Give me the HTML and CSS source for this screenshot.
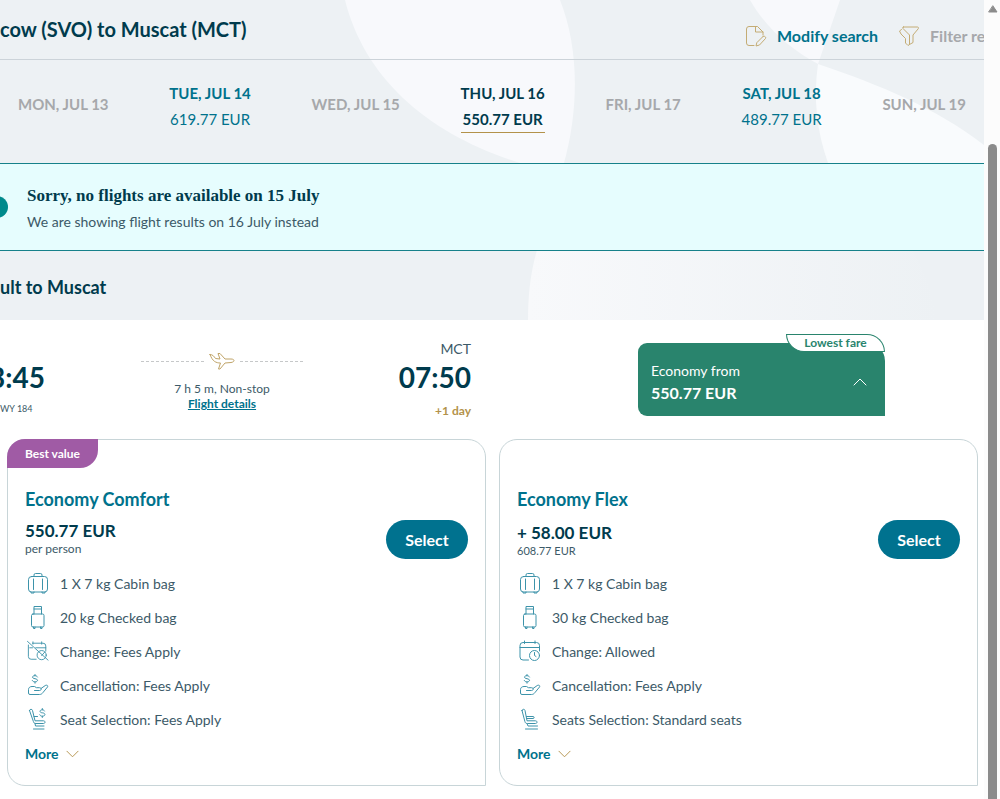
FILE: index.html
```html
<!DOCTYPE html>
<html lang="en">
<head>
  <meta charset="UTF-8">
  <meta name="viewport" content="width=device-width, initial-scale=1.0">
  <title>Flights to Muscat</title>
  <link rel="stylesheet" href="styles.css">
</head>
<body>
  <!-- shared icons -->
  <svg class="sprite" width="0" height="0" aria-hidden="true">
    <symbol id="cabin" viewBox="0 0 22 22">
      <rect x="1.5" y="4.5" width="19" height="15.5" rx="3"/>
      <path d="M7 4.5V3a1.5 1.5 0 0 1 1.5-1.5h5A1.5 1.5 0 0 1 15 3v1.5M6.5 7v10.5M15.5 7v10.5M4 20v1h3v-1M15 20v1h3v-1"/>
    </symbol>
    <symbol id="checked" viewBox="0 0 22 24">
      <rect x="4.5" y="9" width="12.5" height="13" rx="1.5"/>
      <path d="M7 9V1.5h7.500V9M7 4h7.500M6.5 22v1.500H8V22M13.5 22v1.500H15V22"/>
    </symbol>
    <symbol id="calendar" viewBox="0 0 22 22">
      <path d="M9.500 20H4a3 3 0 0 1-3-3V5.500a3 3 0 0 1 3-3h13.500a3 3 0 0 1 3 3V11M1 7.500h19.500M5.500 1v2.500M16 1v2.500"/>
      <circle cx="15.500" cy="15.500" r="5"/>
      <path d="M15.500 12.500v3l1.500 1"/>
    </symbol>
    <symbol id="calendar-off" viewBox="0 0 24 22">
      <path d="M10 20H4.500a3 3 0 0 1-3-3V4.500M6 2.500h11.500a3 3 0 0 1 3 3V11M3 7.500h3M9.500 7.500h11M6.500 1v2.500M16 1v2.500M.5.5l22.500 20.500"/>
      <circle cx="16" cy="15.500" r="5"/>
      <path d="M19.500 12 16 16"/>
    </symbol>
    <symbol id="refund" viewBox="0 0 22 22">
      <path d="M10.500 3C10 2 9 1.700 8 1.700 6.500 1.700 5.500 2.200 5.500 3.200c0 2.100 5 .9 5 3.100 0 1.100-1.200 1.600-2.500 1.600S5.700 7.400 5.300 6.500M8 .5v1.200M8 8v1.200"/>
      <path d="M7.500 16.500h5c2.300 0 2.300-2.800 0-2.800H9.500L7.500 12.500H5c-2 0-3.500 1.200-3.500 3V19A1.500 1.500 0 0 0 3 20.500h9.500c1.500 0 2.700-.8 3.500-2l4.500-5.500c1-1.500-1-2.500-2.500-1.300L14 14.500"/>
    </symbol>
    <symbol id="seat" viewBox="0 0 22 22">
      <path d="M3 2.500c0-1.500 2.700-1.800 3 0l2 10.300h8.500c2 0 2 2.700 0 2.700H8.500c-1.500 0-2.200-.5-2.600-2L3 2.500ZM7.500 8.500h6.500c1.500 0 1.500 2 0 2H8M8 15.500 9 18h9.500M6.500 21h12"/>
    </symbol>
    <symbol id="seat-fee" viewBox="0 0 22 22">
      <path d="M2.500 2.500c0-1.500 2.700-1.800 3 0L8 12.800h8.500c2 0 2 2.700 0 2.700H9c-1.500 0-2.200-.5-2.600-2L2.500 2.500ZM7 8.500h3.500M8 15.500 8.500 18H17M6.500 21H17"/>
      <path d="M17.500 3c-.5-1-1.300-1.200-2.200-1.200-3 0-3 3 0 3 3.500.2 3.500 3.400 0 3.400-1.200 0-2-.4-2.500-1.400M15.300.5v1.300M15.300 8.200v1.300"/>
    </symbol>
    <symbol id="chevron" viewBox="0 0 14 8">
      <path d="m1 1 6 6 6-6"/>
    </symbol>
  </svg>

  <div class="page">
    <main class="content">
      <div class="top">
        <svg class="shapes" viewBox="0 0 984 320" preserveAspectRatio="xMinYMin slice" aria-hidden="true">
          <defs>
            <linearGradient id="fade">
              <stop offset="0" stop-color="#f8f9fb"/>
              <stop offset="1" stop-color="#edf1f4"/>
            </linearGradient>
          </defs>
          <path fill="#f8f9fc" d="M345 0C365 80 430 135 520 163h44C580 105 578 45 560 0Z"/>
          <path fill="#f8f9fc" d="M750 0c15 26 38 48 68 64L840 0Z"/>
          <path fill="#f9fbfd" d="M818 64c-5 35-1 68 10 99h156v-18C936 108 880 85 818 64Z"/>
          <path fill="url(#fade)" d="M537 250c-7 24-9 47-9 70h410c-6-28-14-50-26-70Z"/>
        </svg>

        <header class="topbar">
          <h1>cow (SVO) to Muscat (MCT)</h1>
          <div class="actions">
            <button class="action" type="button">
              <svg viewBox="0 0 22 22" aria-hidden="true"><path d="M9 20.500H4A2.500 2.500 0 0 1 1.500 18V4A2.500 2.500 0 0 1 4 1.500h8.500L18 7v3M10.500 1.500v5.500H18M18 11.500c1-1.200 3.500.6 2.500 2l-6 6.500-3.500 1 .8-3.300 6.200-6.200Z"/></svg>
              Modify search
            </button>
            <button class="action muted" type="button">
              <svg viewBox="0 0 22 22" aria-hidden="true"><path d="M5.500 2h14c1 0 1.300 1 .7 1.800L15 10v7.500l-3.500 2V10L5 3.500C4.300 2.800 4.500 2 5.500 2ZM3.500 4.500 1.500 6 3 9l4.500 4.500v4.500l2.500 2.500 1.500-1"/></svg>
              Filter results
            </button>
          </div>
        </header>

        <nav class="dates" aria-label="Departure date">
          <span class="date off">MON, JUL 13</span>
          <a class="date" href="#">TUE, JUL 14 <span>619.77 EUR</span></a>
          <span class="date off">WED, JUL 15</span>
          <a class="date current" href="#" aria-current="date">THU, JUL 16 <span>550.77 EUR</span></a>
          <span class="date off">FRI, JUL 17</span>
          <a class="date" href="#">SAT, JUL 18 <span>489.77 EUR</span></a>
          <span class="date off">SUN, JUL 19</span>
        </nav>

        <section class="notice">
          <span class="notice-dot"></span>
          <div class="notice-text">
            <h2>Sorry, no flights are available on 15 July</h2>
            <p>We are showing flight results on 16 July instead</p>
          </div>
        </section>

        <h2 class="result-title">ult to Muscat</h2>
      </div>

      <section class="flight">
        <div class="stop depart">
          <span class="airport"></span>
          <strong class="time">3:45</strong>
          <span class="flight-no">WY 184</span>
        </div>
        <div class="route">
          <div class="route-line">
            <svg viewBox="0 0 26 18" aria-hidden="true"><path d="M1 2.500c3 0 4 2 5.500 4l4.500.5-2-5.500h2L16 7h6c4 0 4 3 0 3.500l-6 .5-5 6H9.500l2-6C7 11 3.500 9.500 1 2.500Z"/></svg>
          </div>
          <p>7 h 5 m, Non-stop</p>
          <a href="#">Flight details</a>
        </div>
        <div class="stop arrive">
          <span class="airport">MCT</span>
          <strong class="time">07:50</strong>
          <span class="next-day">+1 day</span>
        </div>
        <button class="fare" type="button">
          <span class="fare-badge">Lowest fare</span>
          <span class="fare-text">Economy from <strong>550.77 EUR</strong></span>
          <svg viewBox="0 0 14 8" aria-hidden="true"><path d="m1 7 6-6 6 6"/></svg>
        </button>
      </section>

      <section class="cards">
        <article class="card">
          <span class="card-badge">Best value</span>
          <h3>Economy Comfort</h3>
          <div class="price-row">
            <div class="price">
              <strong>550.77 EUR</strong>
              <small>per person</small>
            </div>
            <button class="select" type="button">Select</button>
          </div>
          <ul>
            <li><svg><use href="#cabin"/></svg>1 X 7 kg Cabin bag</li>
            <li><svg><use href="#checked"/></svg>20 kg Checked bag</li>
            <li><svg><use href="#calendar-off"/></svg>Change: Fees Apply</li>
            <li><svg><use href="#refund"/></svg>Cancellation: Fees Apply</li>
            <li><svg><use href="#seat-fee"/></svg>Seat Selection: Fees Apply</li>
          </ul>
          <button class="more" type="button">More <svg><use href="#chevron"/></svg></button>
        </article>

        <article class="card">
          <h3>Economy Flex</h3>
          <div class="price-row">
            <div class="price extra">
              <strong>+ 58.00 EUR</strong>
              <small>608.77 EUR</small>
            </div>
            <button class="select" type="button">Select</button>
          </div>
          <ul>
            <li><svg><use href="#cabin"/></svg>1 X 7 kg Cabin bag</li>
            <li><svg><use href="#checked"/></svg>30 kg Checked bag</li>
            <li><svg><use href="#calendar"/></svg>Change: Allowed</li>
            <li><svg><use href="#refund"/></svg>Cancellation: Fees Apply</li>
            <li><svg><use href="#seat"/></svg>Seats Selection: Standard seats</li>
          </ul>
          <button class="more" type="button">More <svg><use href="#chevron"/></svg></button>
        </article>
      </section>
    </main>

    <div class="scrollbar" aria-hidden="true">
      <svg viewBox="0 0 10 8"><path d="M5 1 9 7H1Z"/></svg>
      <span class="thumb"></span>
    </div>
  </div>
</body>
</html>
```
FILE: styles.css
```css
* {
  box-sizing: border-box;
}

body {
  margin: 0;
  font-family: Lato, "Liberation Sans", sans-serif;
  font-size: 14px;
  color: #3c5a68;
  background: #fff;
}

h1, h2, h3, p, ul {
  margin: 0;
  padding: 0;
}

button {
  font-family: inherit;
  border: 0;
  cursor: pointer;
}

svg {
  fill: none;
  stroke: currentColor;
  stroke-linecap: round;
  stroke-linejoin: round;
}

.sprite {
  position: absolute;
}

.page {
  display: flex;
  height: 100vh;
  overflow: hidden;
}

.content {
  flex: 1;
  min-width: 0;
  overflow: hidden;
}

.top {
  position: relative;
  background: #edf1f4;
}

.shapes {
  position: absolute;
  top: 0;
  left: 0;
  width: 100%;
  height: 100%;
  stroke: none;
}

.topbar, .dates, .notice, .result-title {
  position: relative;
}

.topbar {
  display: flex;
  justify-content: space-between;
  height: 60px;
  border-bottom: 1px solid #ccd3d9;
  overflow: hidden;
}

h1 {
  font-size: 20px;
  line-height: 58px;
  color: #003b4d;
  white-space: nowrap;
}

.actions {
  display: flex;
  gap: 20px;
  width: 239px;
  padding-top: 12px;
}

.action {
  display: flex;
  flex-shrink: 0;
  align-items: center;
  gap: 10px;
  padding: 0;
  background: none;
  font-size: 16px;
  font-weight: bold;
  color: #00728c;
  white-space: nowrap;
}

.action.muted {
  color: #a6a8ab;
}

.action svg {
  width: 22px;
  height: 22px;
  stroke: #c4ac74;
}

.dates {
  display: flex;
  justify-content: space-between;
  align-items: center;
  height: 103px;
  padding: 0 18px 16px;
}

.date {
  display: flex;
  flex-direction: column;
  align-items: center;
  font-size: 15px;
  font-weight: bold;
  line-height: 26px;
  color: #a6a8ab;
  text-decoration: none;
  white-space: nowrap;
}

a.date {
  padding-top: 5px;
  color: #00728c;
}

.date span {
  font-weight: normal;
}

a.date.current {
  color: #003b4d;
  border-bottom: 1px solid #b3924a;
}

.date.current span {
  font-weight: bold;
}

.notice {
  display: flex;
  align-items: center;
  height: 88px;
  gap: 19px;
  background: #e6fdfe;
  border-top: 1px solid #16818a;
  border-bottom: 1px solid #16818a;
}

.notice-dot {
  width: 22px;
  height: 22px;
  margin-left: -14px;
  border-radius: 50%;
  background: #008a8c;
}

.notice-text {
  padding-top: 3px;
}

.notice h2 {
  font-family: "Liberation Serif", serif;
  font-size: 17px;
  line-height: 26px;
  color: #003b4d;
}

.notice p {
  line-height: 26px;
}

.result-title {
  font-size: 18px;
  line-height: 72px;
  height: 69px;
  color: #003b4d;
}

.flight {
  display: flex;
  gap: 96px;
  padding-top: 20px;
  height: 119px;
}

.stop {
  display: flex;
  flex-direction: column;
  align-items: flex-end;
  width: 72px;
}

.depart {
  width: 45px;
}

.airport {
  height: 18px;
  line-height: 18px;
}

.time {
  font-size: 28px;
  line-height: 38px;
  color: #003b4d;
}

.flight-no {
  align-self: flex-start;
  font-size: 9px;
  line-height: 26px;
}

.next-day {
  font-size: 12px;
  font-weight: bold;
  line-height: 30px;
  color: #b3924a;
}

.route {
  width: 162px;
  padding-top: 12px;
  text-align: center;
  font-size: 12px;
}

.route-line {
  display: flex;
  align-items: center;
  gap: 5px;
  height: 18px;
  margin-bottom: 11px;
}

.route-line::before,
.route-line::after {
  content: "";
  flex: 1;
  border-top: 1px dashed #c6c8c9;
}

.route-line svg {
  width: 26px;
  height: 18px;
  stroke: #c0a468;
}

.route p,
.route a {
  display: block;
  line-height: 15px;
}

.route a {
  font-weight: bold;
  color: #00728c;
}

.fare {
  position: relative;
  display: flex;
  align-items: center;
  justify-content: space-between;
  width: 247px;
  height: 73px;
  margin: 3px 99px 0 auto;
  padding: 4px 18px 0 13px;
  border-radius: 9px 18px 0 9px;
  background: #29846d;
  color: #fff;
  font-size: 14px;
  text-align: left;
}

.fare-text {
  line-height: 22px;
}

.fare-text strong {
  display: block;
  font-size: 16px;
}

.fare > svg {
  width: 14px;
  height: 8px;
}

.fare-badge {
  position: absolute;
  top: -9px;
  right: 0;
  width: 99px;
  height: 18px;
  border: 1px solid #29846d;
  border-radius: 0 18px 0 18px;
  background: #fff;
  color: #29846d;
  font-size: 12px;
  font-weight: bold;
  line-height: 16px;
  text-align: center;
}

.cards {
  display: grid;
  grid-template-columns: 1fr 1fr;
  gap: 13px;
  padding: 0 6px 13px 7px;
}

.card {
  position: relative;
  height: 347px;
  padding: 46px 17px 0;
  border: 1px solid #c8d5d8;
  border-radius: 18px 18px 0 18px;
}

.card-badge {
  position: absolute;
  top: -1px;
  left: -1px;
  width: 91px;
  border-radius: 18px 0 18px 0;
  background: #a05ba5;
  color: #fff;
  font-size: 12px;
  font-weight: bold;
  line-height: 29px;
  text-align: center;
}

.card h3 {
  font-size: 18px;
  line-height: 26px;
  color: #00728c;
}

.price-row {
  display: flex;
  align-items: center;
  justify-content: space-between;
  height: 54px;
}

.price strong {
  display: block;
  font-size: 17px;
  line-height: 20px;
  color: #003b4d;
}

.price small {
  display: block;
  font-size: 12px;
  line-height: 16px;
}

.price.extra {
  padding-top: 4px;
}

.price.extra small {
  font-size: 11px;
}

.select {
  width: 82px;
  height: 39px;
  border-radius: 20px;
  background: #00728f;
  color: #fff;
  font-size: 16px;
  font-weight: bold;
}

.card ul {
  list-style: none;
}

.card li {
  display: flex;
  align-items: center;
  gap: 11px;
  height: 34px;
  padding-left: 2px;
}

.card li svg {
  width: 22px;
  height: 24px;
  color: #3d93aa;
}

.more {
  display: flex;
  align-items: center;
  gap: 7px;
  padding: 0;
  background: none;
  color: #00728c;
  font-size: 14px;
  font-weight: bold;
  line-height: 36px;
}

.more svg {
  width: 13px;
  height: 8px;
  color: #b3924a;
}

.scrollbar {
  display: flex;
  flex-direction: column;
  align-items: center;
  width: 16px;
  padding: 5px 0 0 1px;
  background: #fcfcfc;
}

.scrollbar svg {
  width: 10px;
  height: 8px;
  fill: #8b8b8b;
  stroke: #8b8b8b;
}

.thumb {
  flex: 1;
  width: 9px;
  margin-top: 131px;
  border-radius: 5px 5px 0 0;
  background: #8b8b8b;
}
```
